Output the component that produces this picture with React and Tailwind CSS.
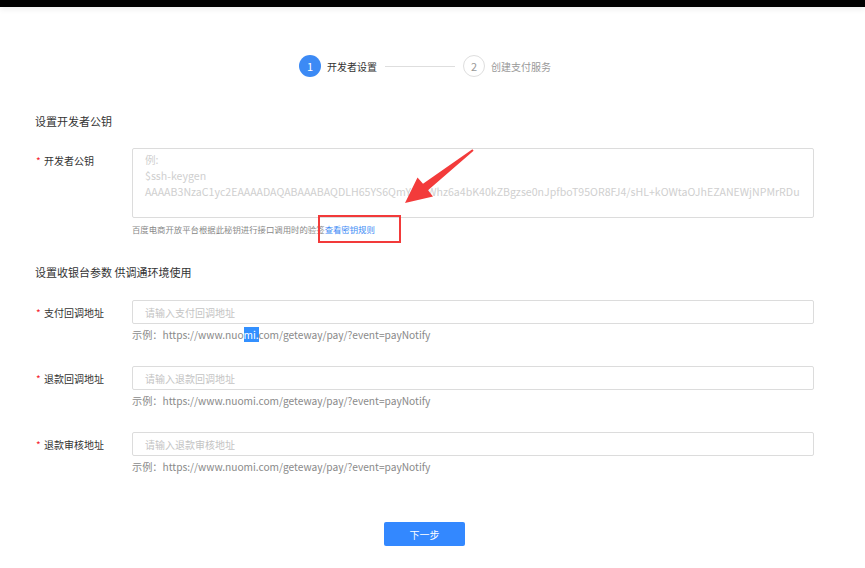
import React from 'react';

const font = { fontFamily: '"Noto Sans CJK SC", "Noto Sans", sans-serif' };

const UrlRow = ({ label, placeholder, highlight }) => (
  <div className="mt-[24px] first:mt-0">
    <div className="flex items-center">
      <div className="w-[97px] flex items-center text-[10px] text-[#333]">
        <span className="text-[#f5222d] w-[9px] pl-[1px]">*</span>
        <span>{label}</span>
      </div>
      <div className="w-[682px] h-[24px] border border-[#dcdcdc] rounded-[2px] px-[12px] flex items-center text-[10px] text-[#c4c4c4]">
        {placeholder}
      </div>
    </div>
    <div className="ml-[97px] mt-[4px] h-[14px] leading-[14px] text-[10.2px] text-[#8a8a8a]">
      {highlight ? (
        <>
          示例：https://www.nuo<span className="bg-[#3390ff] text-white">mi.</span>com/geteway/pay/?event=payNotify
        </>
      ) : (
        '示例：https://www.nuomi.com/geteway/pay/?event=payNotify'
      )}
    </div>
  </div>
);

const App = () => {
  return (
    <div className="relative min-h-[568px] w-[865px] bg-white overflow-hidden" style={font}>
      <div className="h-[7px] bg-black shadow-[0_2px_6px_rgba(0,0,0,0.08)]" />

      {/* steps */}
      <div className="mt-[48px] pl-[299px] flex items-center h-[22px]">
        <div className="w-[22px] h-[22px] rounded-full bg-[#3c8af5] text-white text-[11px] flex items-center justify-center">1</div>
        <span className="ml-[6px] text-[10px] text-[#333]">开发者设置</span>
        <div className="ml-[8px] w-[70px] h-px bg-[#dedede]" />
        <div className="ml-[8px] w-[22px] h-[22px] rounded-full border border-[#dedede] text-[#999] text-[11px] flex items-center justify-center">2</div>
        <span className="ml-[6px] text-[10px] text-[#999]">创建支付服务</span>
      </div>

      <div className="px-[35px]">
        <div className="mt-[36px] h-[16px] leading-[16px] text-[11px] text-[#333]">设置开发者公钥</div>

        <div className="mt-[19px] flex">
          <div className="w-[97px] pt-[5px] flex text-[10px] text-[#333]">
            <span className="text-[#f5222d] w-[9px] pl-[1px]">*</span>
            <span>开发者公钥</span>
          </div>
          <div>
            <div className="w-[682px] h-[70px] border border-[#dcdcdc] rounded-[2px] px-[12px] pt-[3px] text-[10.6px] leading-[16px] text-[#cfcfcf] whitespace-nowrap overflow-hidden">
              <div>例:</div>
              <div>$ssh-keygen</div>
              <div>AAAAB3NzaC1yc2EAAAADAQABAAABAQDLH65YS6QmYgtRWhz6a4bK40kZBgzse0nJpfboT95OR8FJ4/sHL+kOWtaOJhEZANEWjNPMrRDu</div>
            </div>
            <div className="mt-[4px] h-[14px] leading-[14px] text-[8.4px] text-[#888]">
              百度电商开放平台根据此秘钥进行接口调用时的验签<span className="text-[#3c8af5]">查看密钥规则</span>
            </div>
          </div>
        </div>

        <div className="mt-[28px] h-[16px] leading-[16px] text-[11px] text-[#333]">设置收银台参数 供调通环境使用</div>

        <div className="mt-[20px]">
          <UrlRow label="支付回调地址" placeholder="请输入支付回调地址" highlight />
          <UrlRow label="退款回调地址" placeholder="请输入退款回调地址" />
          <UrlRow label="退款审核地址" placeholder="请输入退款审核地址" />
        </div>

        <div className="mt-[48px] ml-[349px] w-[81px] h-[24px] rounded-[2px] bg-[#3388ff] text-white text-[10px] flex items-center justify-center">
          下一步
        </div>
      </div>

      {/* annotation overlay */}
      <div className="absolute left-[318px] top-[215px] w-[83px] h-[28px] border-2 border-[#f23a3a]" />
      <svg className="absolute inset-0 pointer-events-none" width="865" height="568" viewBox="0 0 865 568">
        <polygon
          points="472.4,149.2 423,183.8 417.5,177.5 405,203 433,196.5 428,190.2 473.6,150.8"
          fill="#f33b3b"
        />
      </svg>
    </div>
  );
};

export default App;
